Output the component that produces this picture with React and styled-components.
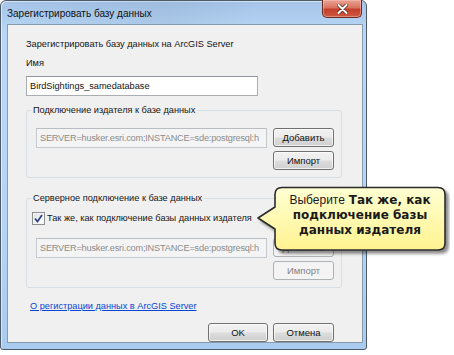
import React, {useState} from 'react';
import styled, {createGlobalStyle} from 'styled-components';

const GlobalStyle = createGlobalStyle`
    html, body {
        margin: 0;
        padding: 0;
        background: #ffffff;
    }
    body {
        font-family: "Liberation Sans", Arial, sans-serif;
        font-size: 9.2px;
        color: #141414;
    }
`;

const Page = styled.div`
    position: relative;
    width: 454px;
    height: 355px;
    display: flex;
    align-items: flex-start;
`;

const Window = styled.div`
    box-sizing: border-box;
    width: 367px;
    height: 350px;
    display: flex;
    flex-direction: column;
    padding: 0 3px 6px 6px;
    border: 1px solid #4d5b69;
    border-radius: 6px 6px 3px 3px;
    background: linear-gradient(180deg, #a4c3e6 0%, #b9d8f7 9%, #b6d5f5 60%, #a9cbef 100%);
    box-shadow: inset 1px 1px 0 rgba(255, 255, 255, 0.55);
`;

const TitleBar = styled.div`
    height: 23px;
    display: flex;
    align-items: flex-start;
    justify-content: space-between;
    background: linear-gradient(90deg, rgba(120, 150, 185, 0) 0%, rgba(140, 165, 195, 0.25) 45%, rgba(120, 150, 185, 0) 70%);
`;

const Title = styled.span`
    padding-top: 5px;
    line-height: 16px;
    font-size: 10px;
    color: #111;
`;

const CloseButton = styled.button`
    width: 40px;
    height: 18px;
    margin: -1px 1px 0 0;
    padding: 0;
    display: flex;
    align-items: center;
    justify-content: center;
    border: 1px solid #6b2a22;
    border-top: none;
    border-radius: 0 0 5px 5px;
    background: linear-gradient(180deg, #e9a595 0%, #d9735f 45%, #c2402c 55%, #cf5a3e 100%);
    box-shadow: inset 0 0 0 1px rgba(255, 200, 190, 0.45);
`;

const Client = styled.div`
    flex: 1;
    display: flex;
    flex-direction: column;
    padding: 11px 20px 0 18px;
    border: 1px solid #8a9bab;
    background: #f0f0f0;
`;

const Heading = styled.div`
    line-height: 16px;
`;

const Label = styled.div`
    margin-top: 3px;
    line-height: 16px;
`;

const TextBox = styled.div`
    box-sizing: border-box;
    width: ${(p) => p.$width || '100%'};
    height: 20px;
    margin-top: ${(p) => p.$top || '0'};
    padding: 0 3px;
    line-height: 18px;
    white-space: nowrap;
    overflow: hidden;
    letter-spacing: ${(p) => (p.$disabled ? '-0.2px' : 'normal')};
    border: 1px solid ${(p) => (p.$disabled ? '#c4c9cd' : '#abadb3')};
    border-top-color: ${(p) => (p.$disabled ? '#b8bdc1' : '#8e9499')};
    background: ${(p) => (p.$disabled ? '#f4f4f4' : '#ffffff')};
    color: ${(p) => (p.$disabled ? '#8c8c8c' : '#141414')};
`;

const Group = styled.fieldset`
    margin: ${(p) => p.$top} 0 0 0;
    padding: ${(p) => p.$padTop} 7px 7px 9px;
    border: 1px solid #d5dfe5;
    border-radius: 3px;
    min-width: 0;
`;

const Legend = styled.legend`
    margin-left: -5px;
    padding: 0 2px;
    line-height: 16px;
`;

const ConnRow = styled.div`
    display: grid;
    grid-template-columns: 1fr 61px;
    column-gap: 6px;
    align-items: start;
    margin-top: ${(p) => p.$top || '0'};
`;

const ButtonStack = styled.div`
    display: flex;
    flex-direction: column;
    gap: 4px;
`;

const Button = styled.button`
    box-sizing: border-box;
    width: ${(p) => p.$width || '61px'};
    height: 19px;
    padding: 0;
    font-family: inherit;
    font-size: 9.5px;
    line-height: 17px;
    border: 1px solid ${(p) => (p.disabled ? '#adb2b5' : '#707070')};
    border-radius: 3px;
    color: ${(p) => (p.disabled ? '#838383' : '#111')};
    background: ${(p) => (p.disabled
        ? '#f4f4f4'
        : 'linear-gradient(180deg, #f2f2f2 0%, #ebebeb 48%, #dddddd 52%, #cfcfcf 100%)')};
    box-shadow: inset 0 0 0 1px ${(p) => (p.disabled ? '#f4f4f4' : 'rgba(255,255,255,0.7)')};
`;

const CheckRow = styled.label`
    display: flex;
    align-items: center;
    gap: 2px;
    margin-left: -4px;
    line-height: 14px;
`;

const CheckBox = styled.span`
    box-sizing: border-box;
    width: 13px;
    height: 13px;
    display: inline-flex;
    align-items: center;
    justify-content: center;
    border: 1px solid #8e8f8f;
    background: linear-gradient(135deg, #dcdcdc 0%, #f5f5f5 60%, #ffffff 100%);
    box-shadow: inset 0 0 0 1px #f4f4f4;
`;

const HelpLink = styled.a`
    margin: 10px 0 0 4px;
    line-height: 16px;
    color: #0645d8;
    text-decoration: underline;
    align-self: flex-start;
`;

const Footer = styled.div`
    margin: 9px 8px 0 0;
    display: flex;
    justify-content: flex-end;
    gap: 5px;
`;

const Callout = styled.div`
    position: absolute;
    left: 255px;
    top: 185px;
    width: 195px;
    height: 72px;
`;

const CalloutText = styled.div`
    position: absolute;
    left: 20px;
    top: 8px;
    width: 170px;
    text-align: center;
    font-family: "DejaVu Sans", "Liberation Sans", sans-serif;
    font-size: 12px;
    line-height: 15px;
    color: #1a1a1a;

    & b {
        font-weight: bold;
    }
`;

const Lead = styled.span`
    font-family: "Liberation Sans", Arial, sans-serif;
    font-size: 12px;
`;

function CalloutShape() {
    return (
        <svg width="195" height="72" viewBox="0 0 195 72" style={{position: 'absolute', left: 0, top: 0}}>
            <defs>
                <linearGradient id="tipFill" x1="0" y1="0" x2="0" y2="1">
                    <stop offset="0" stopColor="#ffffd2" />
                    <stop offset="1" stopColor="#fff390" />
                </linearGradient>
                <filter id="tipShadow" x="-10%" y="-10%" width="130%" height="140%">
                    <feDropShadow dx="3" dy="3" stdDeviation="1.5" floodColor="#000" floodOpacity="0.45" />
                </filter>
            </defs>
            <path
                d="M27 2.5 H183 Q190 2.5 190 9.5 V58 Q190 65 183 65 H27 Q20 65 20 58 V44 L3 33 L20 22 V9.5 Q20 2.5 27 2.5 Z"
                fill="url(#tipFill)"
                stroke="#2b2b2b"
                strokeWidth="1.6"
                strokeLinejoin="round"
                filter="url(#tipShadow)"
            />
        </svg>
    );
}

function App() {
    const [sameAsPublisher, setSameAsPublisher] = useState(true);
    // only the part of the connection string the box can show
    const connString = 'SERVER=husker.esri.com;INSTANCE=sde:postgresql:h';

    return (
        <Page>
            <GlobalStyle />
            <Window>
                <TitleBar>
                    <Title>Зарегистрировать базу данных</Title>
                    <CloseButton aria-label="Закрыть">
                        <svg width="11" height="10" viewBox="0 0 11 10">
                            <path d="M1.5 1 L9.5 9 M9.5 1 L1.5 9" stroke="#5a2a20" strokeWidth="3.6" strokeLinecap="round" />
                            <path d="M1.5 1 L9.5 9 M9.5 1 L1.5 9" stroke="#ffffff" strokeWidth="2" strokeLinecap="round" />
                        </svg>
                    </CloseButton>
                </TitleBar>
                <Client>
                    <Heading>Зарегистрировать базу данных на ArcGIS Server</Heading>
                    <Label>Имя</Label>
                    <TextBox $width="232px" $top="5px">BirdSightings_samedatabase</TextBox>

                    <Group $top="6px" $padTop="10px">
                        <Legend>Подключение издателя к базе данных</Legend>
                        <ConnRow>
                            <TextBox $disabled>{connString}</TextBox>
                            <ButtonStack>
                                <Button>Добавить</Button>
                                <Button>Импорт</Button>
                            </ButtonStack>
                        </ConnRow>
                    </Group>

                    <Group $top="12px" $padTop="5px">
                        <Legend>Серверное подключение к базе данных</Legend>
                        <CheckRow onClick={() => setSameAsPublisher(!sameAsPublisher)}>
                            <CheckBox>
                                {sameAsPublisher && (
                                    <svg width="9" height="9" viewBox="0 0 9 9">
                                        <path d="M1 4.5 L3.5 7.5 L8 1" fill="none" stroke="#2a3f8f" strokeWidth="1.7" />
                                    </svg>
                                )}
                            </CheckBox>
                            Так же, как подключение базы данных издателя
                        </CheckRow>
                        <ConnRow $top="13px">
                            <TextBox $disabled>{connString}</TextBox>
                            <ButtonStack>
                                <Button disabled>Добавить</Button>
                                <Button disabled>Импорт</Button>
                            </ButtonStack>
                        </ConnRow>
                    </Group>

                    <HelpLink href="#">О регистрации данных в ArcGIS Server</HelpLink>

                    <Footer>
                        <Button $width="60px">OK</Button>
                        <Button>Отмена</Button>
                    </Footer>
                </Client>
            </Window>
            <Callout>
                <CalloutShape />
                <CalloutText>
                    <Lead>Выберите</Lead> <b>Так же, как</b>
                    <br />
                    <b>подключение базы</b>
                    <br />
                    <b>данных издателя</b>
                </CalloutText>
            </Callout>
        </Page>
    );
}

export default App;
